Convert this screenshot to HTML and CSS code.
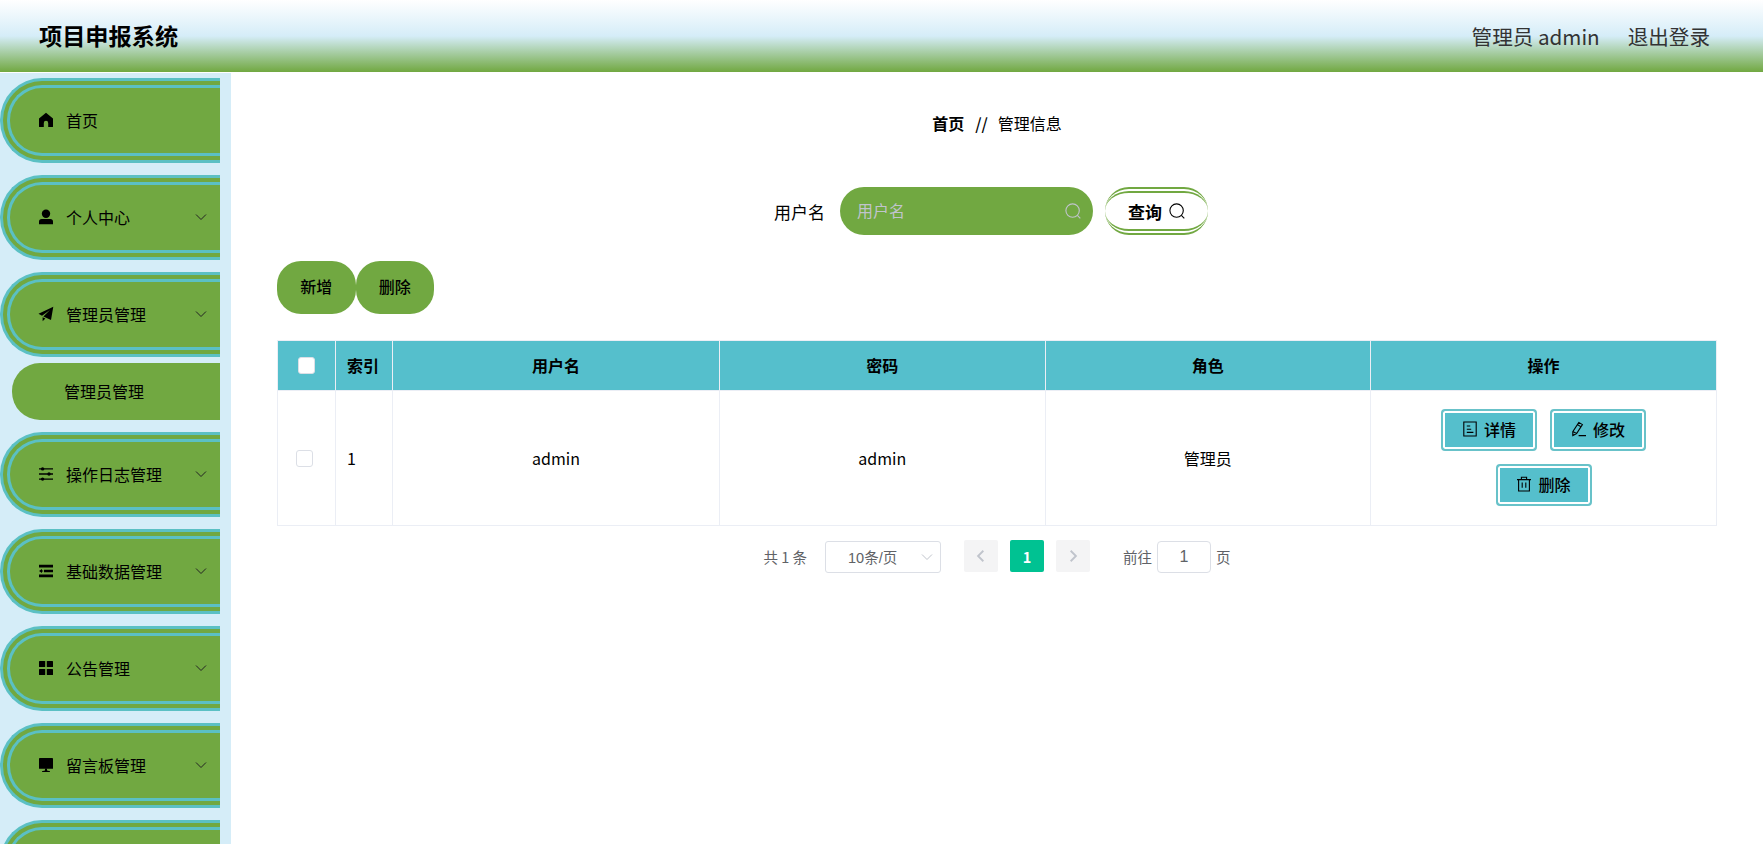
FILE: index.html
```
<!DOCTYPE html>
<html lang="zh-CN">
<head>
 <meta charset="UTF-8">
 <meta name="viewport" content="width=device-width, initial-scale=1.0">
 <title>项目申报系统</title>
 <link rel="stylesheet" href="styles.css">
</head>
<body>
 <header class="navbar">
 <h1 class="navbar-title">项目申报系统</h1>
 <div class="navbar-right">
 <span>管理员 admin</span>
 <span class="logout">退出登录</span>
 </div>
 </header>
 <div class="container">
 <aside class="sidebar">
 <div class="menu-item">
 <svg class="menu-icon" viewBox="0 0 16 16"><path d="M8 .8 1 6.6V14.5a.6.6 0 0 0 .6.6H5.8V11a2.2 2.2 0 0 1 4.4 0v4.1h4.2a.6.6 0 0 0 .6-.6V6.6z"/></svg>
 <span class="menu-text">首页</span>
 </div>
 <div class="menu-item">
 <svg class="menu-icon" viewBox="0 0 16 16"><circle cx="8" cy="4.8" r="4.2"/><path d="M1 15.2v-2.4a2.7 2.7 0 0 1 2.7-2.7h8.6a2.7 2.7 0 0 1 2.7 2.7v2.4z"/></svg>
 <span class="menu-text">个人中心</span>
 <svg class="arrow" viewBox="0 0 12 12"><path d="M1 3.5 6 8.5 11 3.5"/></svg>
 </div>
 <div class="menu-item">
 <svg class="menu-icon" viewBox="0 0 16 16"><path d="M15.3.8.5 7.8 4 9.8 12 4 5.4 10.6 13 14z"/><path d="M4.6 11.2v4l2.8-2.7z"/></svg>
 <span class="menu-text">管理员管理</span>
 <svg class="arrow" viewBox="0 0 12 12"><path d="M1 3.5 6 8.5 11 3.5"/></svg>
 </div>
 <div class="submenu-item">管理员管理</div>
 <div class="menu-item">
 <svg class="menu-icon" viewBox="0 0 16 16"><path d="M1 2.2h14v1.4H1zM1 7.3h14v1.4H1zM1 12.4h14v1.4H1z"/><circle cx="4.6" cy="2.9" r="1.7"/><circle cx="11" cy="8" r="1.7"/><circle cx="4.6" cy="13.1" r="1.7"/></svg>
 <span class="menu-text">操作日志管理</span>
 <svg class="arrow" viewBox="0 0 12 12"><path d="M1 3.5 6 8.5 11 3.5"/></svg>
 </div>
 <div class="menu-item">
 <svg class="menu-icon" viewBox="0 0 16 16"><path d="M1 1.8h14v2.6H1zM6 6.8h9v2.4H6zM1 11.6h14v2.6H1zM1 8l3-2v1.4h1.2v1.2H4V10z"/></svg>
 <span class="menu-text">基础数据管理</span>
 <svg class="arrow" viewBox="0 0 12 12"><path d="M1 3.5 6 8.5 11 3.5"/></svg>
 </div>
 <div class="menu-item">
 <svg class="menu-icon" viewBox="0 0 16 16"><rect x="1" y="1" width="6.2" height="6" rx=".6"/><rect x="8.8" y="1" width="6.2" height="6" rx=".6"/><rect x="1" y="9" width="6.2" height="6" rx=".6"/><rect x="8.8" y="9" width="6.2" height="6" rx=".6"/></svg>
 <span class="menu-text">公告管理</span>
 <svg class="arrow" viewBox="0 0 12 12"><path d="M1 3.5 6 8.5 11 3.5"/></svg>
 </div>
 <div class="menu-item">
 <svg class="menu-icon" viewBox="0 0 16 16"><rect x="1" y="1" width="14" height="10.8" rx=".4"/><path d="M7 11.6h2v2l3 .6v.9H4v-.9l3-.6z"/></svg>
 <span class="menu-text">留言板管理</span>
 <svg class="arrow" viewBox="0 0 12 12"><path d="M1 3.5 6 8.5 11 3.5"/></svg>
 </div>
 <div class="menu-item"></div>
 </aside>
 <main class="main">
 <div class="breadcrumb">
 <b>首页</b><span class="separator">//</span><span>管理信息</span>
 </div>
 <div class="search-form">
 <label class="search-label" for="username">用户名</label>
 <div class="search-box">
 <input type="text" id="username" class="search-input" placeholder="用户名">
 <svg class="search-icon" viewBox="0 0 16 16"><circle cx="7.6" cy="7.6" r="6.7"/><path d="m12.4 12.4 2.9 2.9"/></svg>
 </div>
 <button class="search-button">查询<svg class="search-icon" viewBox="0 0 16 16"><circle cx="7.6" cy="7.6" r="6.7"/><path d="m12.4 12.4 2.9 2.9"/></svg></button>
 </div>
 <div class="toolbar">
 <button class="tool-button">新增</button>
 <button class="tool-button">删除</button>
 </div>
 <table class="table">
 <colgroup>
 <col class="col-check"><col class="col-index"><col class="col-name"><col class="col-data"><col class="col-data"><col class="col-action">
 </colgroup>
 <thead>
 <tr>
 <th><span class="checkbox"></span></th>
 <th class="left">索引</th>
 <th>用户名</th>
 <th>密码</th>
 <th>角色</th>
 <th>操作</th>
 </tr>
 </thead>
 <tbody>
 <tr>
 <td class="check"><span class="checkbox"></span></td>
 <td class="left">1</td>
 <td>admin</td>
 <td>admin</td>
 <td>管理员</td>
 <td>
 <div class="actions">
 <button class="action-button"><svg class="action-icon" viewBox="0 0 16 16"><path d="M1.8 1h12.4v14H1.8zM4.8 5h3.4M4.8 8.2h4.4M4.8 11.4h6.6"/></svg>详情</button>
 <button class="action-button"><svg class="action-icon" viewBox="0 0 16 16"><path d="M7.8 1.4 11.4 3.6 5.6 12.6 1.8 14.6 1.8 10.6zM6.4 3.6l3.6 2.2M1.8 10.6 5.6 12.6M7.6 14.6H15"/></svg>修改</button>
 <button class="action-button"><svg class="action-icon" viewBox="0 0 16 16"><path d="M1 3.6h14M2.6 3.6V15h10.8V3.6M5.4 3.4V1.2h5.2v2.2M6.2 6.4v5.4M9.8 6.4v5.4"/></svg>删除</button>
 </div>
 </td>
 </tr>
 </tbody>
 </table>
 <div class="pagination">
 <span class="total">共 1 条</span>
 <div class="page-size">10条/页<svg class="size-arrow" viewBox="0 0 12 12"><path d="M1 3.5 6 8.5 11 3.5"/></svg></div>
 <button class="page-button"><svg viewBox="0 0 12 12"><path d="M8 1.5 3.5 6 8 10.5"/></svg></button>
 <button class="page-button active">1</button>
 <button class="page-button"><svg viewBox="0 0 12 12"><path d="M4 1.5 8.5 6 4 10.5"/></svg></button>
 <span class="jump">前往</span>
 <input type="text" class="page-input" value="1">
 <span>页</span>
 </div>
 </main>
 </div>
</body>
</html>
```

FILE: styles.css
```
* {
 margin: 0;
 padding: 0;
 box-sizing: border-box;
}
body {
 height: 100vh;
 overflow: hidden;
 background: #fff;
 color: #000;
 font-family: "Noto Sans CJK SC", sans-serif;
 font-size: 16px;
}
button,
input {
 font-family: inherit;
 outline: none;
}
.navbar {
 height: 72px;
 padding: 0 53px 0 39px;
 display: flex;
 align-items: center;
 justify-content: space-between;
 background: linear-gradient(180deg, #fff 0%, #d5edf8 50%, #71a841 100%);
}
.navbar-title {
 padding-bottom: 2px;
 font-size: 23.2px;
 line-height: 70px;
 font-weight: 700;
}
.navbar-right {
 padding-bottom: 1px;
 display: flex;
 gap: 28px;
 font-size: 20.6px;
 color: #333;
}
.container {
 height: calc(100vh - 73px);
 margin-top: 1px;
 display: flex;
}
.sidebar {
 width: 231px;
 flex: none;
 padding-top: 5px;
 overflow: hidden;
 background: #d5edf8;
}
.menu-item {
 width: 220px;
 height: 85px;
 margin-bottom: 12px;
 padding: 0 13px 2px 28px;
 display: flex;
 align-items: center;
 border: 10px double #5bc0c4;
 border-right: none;
 border-radius: 42px 0 0 42px;
 background: #71a841;
}
.menu-icon {
 width: 16px;
 height: 16px;
 margin-right: 12px;
 fill: #000;
}
.menu-text {
 flex: 1;
}
.arrow {
 width: 12px;
 height: 12px;
 fill: none;
 stroke: #222;
 stroke-width: 1;
}
.submenu-item {
 width: 208px;
 height: 57px;
 margin: -6px 0 12px 12px;
 padding-left: 52px;
 line-height: 57px;
 border-radius: 28px 0 0 28px;
 background: #71a841;
}
.main {
 flex: 1;
 padding: 38px 46px 0;
}
.breadcrumb {
 height: 24px;
 display: flex;
 justify-content: center;
 align-items: center;
}
.separator {
 margin: 0 10px 0 11px;
 font-weight: 500;
}
.search-form {
 height: 48px;
 margin: 52px 12px 26px 0;
 display: flex;
 justify-content: center;
 align-items: center;
}
.search-label {
 margin-right: 15px;
 font-size: 17px;
}
.search-box {
 width: 253px;
 height: 48px;
 margin-right: 12px;
 padding: 0 12px 0 17px;
 display: flex;
 align-items: center;
 border-radius: 24px;
 background: #71a841;
}
.search-input {
 flex: 1;
 width: 100%;
 height: 44px;
 padding-bottom: 2px;
 border: none;
 background: none;
 font-size: 16px;
}
.search-input::placeholder {
 color: #c0c4cc;
}
.search-icon {
 width: 16px;
 height: 16px;
 fill: none;
 stroke: #c0c4cc;
 stroke-width: 1.1;
}
.search-button {
 width: 103px;
 height: 48px;
 display: flex;
 align-items: center;
 justify-content: center;
 gap: 7px;
 border: double #71a841;
 border-width: 6px 0;
 border-radius: 24px;
 background: #fff;
 font-size: 17px;
 font-weight: 600;
}
.search-button .search-icon {
 stroke: #000;
}
.toolbar {
 height: 53px;
 margin-bottom: 26px;
 display: flex;
}
.tool-button {
 width: 78.5px;
 height: 53px;
 padding-bottom: 3px;
 border: none;
 border-radius: 24px;
 background: #71a841;
 color: #000;
 font-size: 16px;
 font-weight: 500;
}
.table {
 width: 1440px;
 table-layout: fixed;
 border-collapse: collapse;
 text-align: center;
}
.table th,
.table td {
 border: 1px solid #ebeef5;
 vertical-align: middle;
}
.table th {
 height: 50px;
 padding-bottom: 1px;
 background: #55bfcc;
 font-weight: 700;
}
.table td {
 height: 135px;
 padding-bottom: 1px;
}
.table .left {
 padding-left: 11px;
 text-align: left;
}
.table .check {
 padding-right: 5px;
}
.col-check {
 width: 58px;
}
.col-index {
 width: 57px;
}
.col-name {
 width: 327px;
}
.col-data {
 width: 325.5px;
}
.checkbox {
 width: 17px;
 height: 17px;
 display: inline-block;
 border: 1px solid #dcdfe6;
 border-radius: 3px;
 background: #fff;
 vertical-align: -2px;
}
.actions {
 padding: 0 60px;
 display: flex;
 flex-wrap: wrap;
 justify-content: center;
 gap: 13px;
}
.action-button {
 width: 96px;
 height: 42px;
 padding-bottom: 3px;
 display: flex;
 align-items: center;
 justify-content: center;
 gap: 6px;
 border: 2px solid #68c2c9;
 border-radius: 4px;
 background: #55bfcc;
 box-shadow: inset 0 0 0 2px #fff;
 color: #000;
 font-size: 16px;
 font-weight: 500;
}
.action-icon {
 width: 16px;
 height: 16px;
 fill: none;
 stroke: #000;
 stroke-width: 1.1;
}
.pagination {
 margin-top: 14px;
 height: 33px;
 display: flex;
 align-items: center;
 justify-content: center;
 color: #606266;
 font-size: 14.5px;
}
.page-size {
 width: 116px;
 height: 32px;
 margin: 0 23px 0 18px;
 padding: 0 7px 0 22px;
 display: flex;
 align-items: center;
 justify-content: space-between;
 border: 1px solid #dcdfe6;
 border-radius: 3px;
 font-family: "Liberation Sans", "Noto Sans CJK SC", sans-serif;
}
.size-arrow {
 width: 12px;
 height: 12px;
 fill: none;
 stroke: #c0c4cc;
}
.page-button {
 width: 34px;
 height: 32px;
 margin: 0 12px 1px 0;
 display: flex;
 align-items: center;
 justify-content: center;
 border: none;
 border-radius: 2px;
 background: #f4f4f5;
}
.page-button svg {
 width: 14px;
 height: 14px;
 fill: none;
 stroke: #c0c4cc;
 stroke-width: 1.6;
}
.page-button.active {
 background: #00c292;
 color: #fff;
 font-size: 14.5px;
 font-weight: 700;
}
.jump {
 margin-left: 21px;
}
.page-input {
 width: 54px;
 height: 32px;
 margin: 0 5px;
 border: 1px solid #dcdfe6;
 border-radius: 4px;
 color: #606266;
 font-family: "Liberation Sans", sans-serif;
 font-size: 16px;
 text-align: center;
}
```
